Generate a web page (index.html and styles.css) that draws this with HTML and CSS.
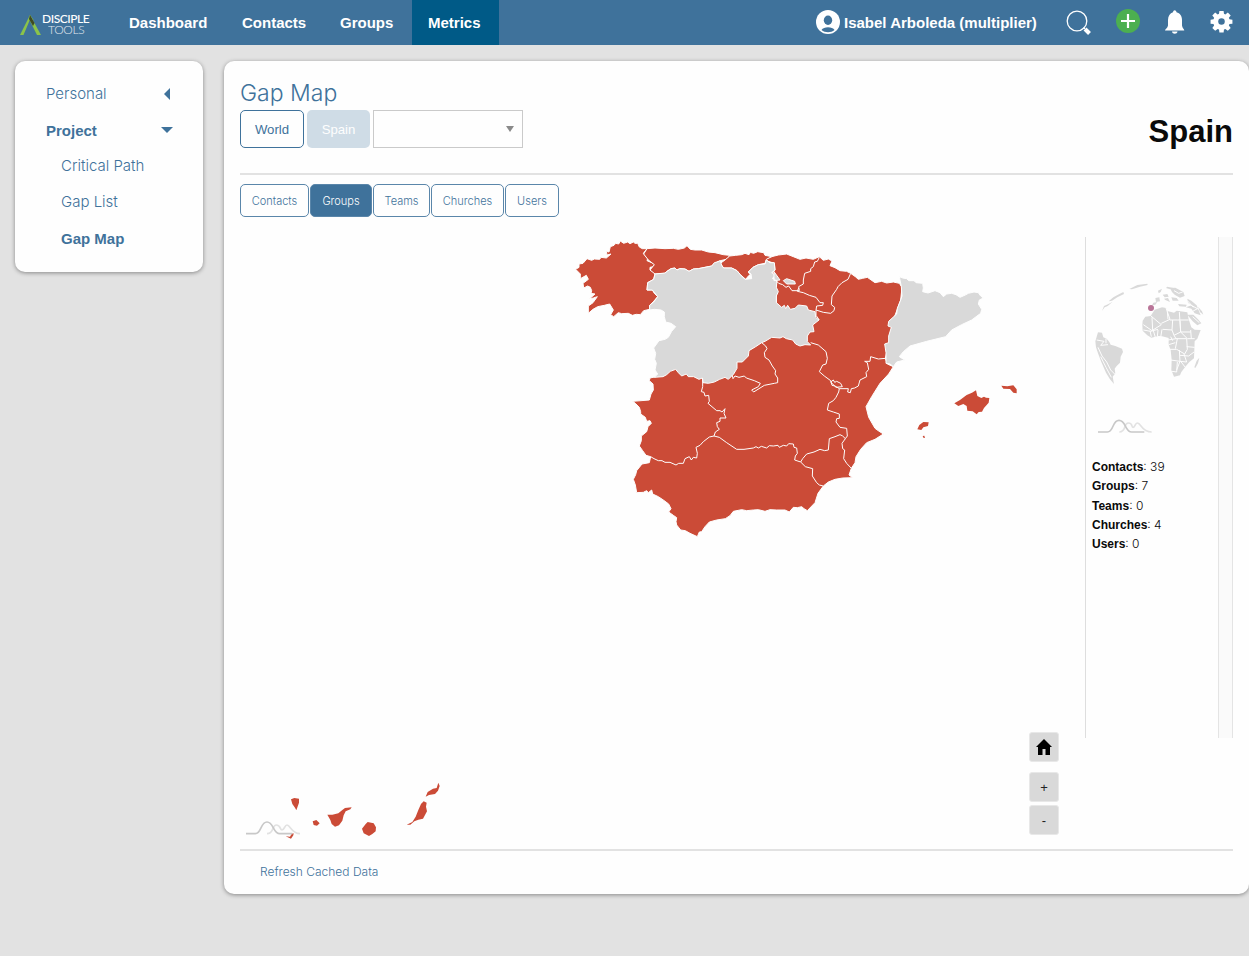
FILE: index.html
```html
<!DOCTYPE html>
<html lang="en">
<head>
<meta charset="utf-8">
<title>Gap Map</title>
<link rel="stylesheet" href="styles.css">
</head>
<body>
<header class="topbar">
  <a class="brand">
    <svg class="brand-mark" viewBox="0 0 21 20"><path d="M0 20 10 0l3.500 5-2 2-1.500-2.500L3.500 20z" fill="#8bc34a"/><path d="m10 0 11 20h-4L9 4z" fill="#8bc34a"/><path d="m10 0 4.500 8-1.500 3-4-7z" fill="#3f4a22"/></svg>
    <span class="brand-text"><b>DISCIPLE</b><span>TOOLS</span></span>
  </a>
  <nav class="menu">
    <a class="w-dash">Dashboard</a><a class="w-contacts">Contacts</a><a class="w-groups">Groups</a><a class="w-metrics active">Metrics</a>
  </nav>
  <div class="tools">
    <svg class="avatar" viewBox="0 0 24 24"><circle cx="12" cy="12" r="12" fill="#fff"/><ellipse cx="12" cy="10.300" rx="4.200" ry="4.700" fill="#3f729b"/><path d="M5.500 20c2-3.700 11-3.700 13 0-3.500 3-9.500 3-13 0z" fill="#3f729b"/></svg>
    <span class="user">Isabel Arboleda (multiplier)</span>
    <svg class="search" viewBox="0 0 25 25"><circle cx="11" cy="11" r="9.800" fill="none" stroke="#fff" stroke-width="1.300"/><path d="m17.500 17.500 1.500 1.500" stroke="#fff"/><path d="m19 19 4.500 4.500" stroke="#fff" stroke-width="4"/></svg>
    <svg class="plus" viewBox="0 0 24 24"><circle cx="12" cy="12" r="12" fill="#4caf50"/><path d="M5 12h14M12 5v14" stroke="#fff" stroke-width="2.200"/></svg>
    <svg class="bell" viewBox="0 0 20 24"><path d="M0 20.500c0-1.500 2.700-2.500 3-5V10c0-4 2-6.800 5-7.700C8 1 9 .3 9.700.3S11.500 1 11.500 2.300C15 3.200 17 6 17 10v5.500c.3 2.500 2.300 3.500 2.300 5z" fill="#fff"/><path d="M7 21.500h5.500c-.3 3-5.200 3-5.500 0z" fill="#fff"/></svg>
    <svg class="gear" viewBox="0 0 24 24"><path d="m9.800 1h4.400l.4 3 1.400.6L18.600 2.700l3 3-1.900 2.500.6 1.500 3.100.4v4.200l-3.100.4-.6 1.500 1.900 2.500-3 3-2.600-1.900-1.400.6-.4 3H9.800l-.4-3-1.400-.6-2.600 1.900-3-3 1.900-2.500-.6-1.500-3.100-.4v-4.200l3.100-.4.6-1.500-1.900-2.500 3-3L8 4.600 9.400 4z" fill="#fff"/><circle cx="12" cy="12" r="3.400" fill="#3f729b"/></svg>
  </div>
</header>
<div class="layout">
  <aside class="card side">
    <a>Personal <i class="tri-left"></i></a>
    <a class="strong">Project <i class="tri-down"></i></a>
    <a class="sub">Critical Path</a>
    <a class="sub">Gap List</a>
    <a class="sub strong">Gap Map</a>
  </aside>
  <main class="card content">
    <section class="head">
      <div>
        <h1>Gap Map</h1>
        <div class="picker">
          <button class="world">World</button><button class="disabled">Spain</button>
          <div class="select"><i></i></div>
        </div>
      </div>
      <h2>Spain</h2>
    </section>
    <div class="tabs">
      <button class="t1">Contacts</button><button class="t2 on">Groups</button><button class="t3">Teams</button><button class="t4">Churches</button><button class="t5">Users</button>
    </div>
    <section class="chart">
      <div class="map">
        <svg viewBox="720 711 2535 1833">
          <g class="area">
            <g transform="translate(1860 1080)">
              <path d="M435-302 455-310 475-315 500-318 520-310 540-302 558-306 580-302 598-310 610-299 625-303 636-297 630-283 645-277 660-268 680-266 692-260 706-250 715-242 728-245 742-248 765-232 785-236 800-231 820-234 838-230 846-218 842-180 820-120 805-42 796-5 802 12 820 20 806 42 780 70 755 110 738 140 746 172 765 205 776 213 790 222 765 238 740 248 722 268 708 290 705 308 694 325 687 345 698 353 668 354 645 358 625 366 610 378 594 400 585 428 562 452 552 446 545 440 532 443 520 442 508 456 495 450 470 450 450 449 435 454 415 449 400 450 380 452 365 449 340 454 330 467 316 476 290 480 268 486 255 500 245 515 238 516 232 530 210 520 196 512 182 510 170 495 168 485 170 473 160 466 146 456 153 446 146 432 130 420 115 410 98 402 95 390 85 398 80 392 70 397 50 398 46 375 40 358 47 344 50 332 66 312 88 308 92 290 78 286 68 272 58 258 64 242 64 228 80 215 84 200 94 190 90 182 80 184 76 172 62 162 62 155 58 142 46 130 38 124 88 120 93 102 100 90 99 72 88 62 90 54 108 50 180 -60 420-90 467-110 469-170 467-245 455-258 465-270 463-290 445-296z"/>
            </g>
            <g transform="translate(1695 690)">
              <path d="M32 118 42 112 42 102 54 100 66 86 80 91 88 87 104 88 108 82 124 84 138 72 126 75 124 64 132 66 136 50 147 46 152 40 161 42 166 33 176 40 188 36 195 41 205 36 210 40 218 40 223 51 232 56 246 56 235 70 248 85 246 92 260 98 270 103 266 110 255 112 255 120 266 125 270 132 266 148 248 158 246 180 262 180 268 190 278 200 266 214 254 226 254 238 236 242 226 254 214 253 202 256 190 250 170 251 160 248 146 260 137 254 145 240 134 222 118 226 98 230 84 238 70 250 70 228 84 218 97 200 85 204 74 206 90 192 78 190 80 182 76 172 68 168 56 174 54 160 70 148 64 136 46 146 46 132z"/>
              <path d="M246 56 270 54 300 56 325 55 340 58 358 54 366 47 376 58 390 60 410 60 430 66 450 68 475 74 494 76 488 87 466 92 456 96 440 108 420 112 400 116 385 117 372 124 360 117 344 116 336 120 330 114 318 116 306 124 300 130 270 132 255 120 268 104 250 90 236 72z"/>
              <path d="M494 78 512 76 530 74 540 70 552 74 556 67 566 70 578 65 596 68 600 76 620 80 604 88 600 100 580 104 564 112 550 126 558 138 552 136 542 148 526 134 516 122 500 114 476 114 466 100 480 90z"/>
            </g>
          </g>
          <g class="area muted">
            <path transform="translate(1695 690)" d="M270 132 300 129 306 124 318 116 330 114 336 120 344 116 360 117 372 124 385 117 400 116 420 112 440 108 448 98 456 96 466 92 470 106 476 114 500 114 516 122 526 134 540 148 560 146 558 132 550 126 564 112 580 104 600 102 604 90 615 98 628 98 630 120 620 128 632 136 622 145 636 152 634 172 640 185 634 198 634 218 650 232 658 226 662 236 668 226 676 238 690 235 700 225 725 228 730 240 750 245 752 262 762 270 743 285 747 305 735 306 727 318 727 335 737 345 720 344 705 348 692 342 683 330 664 326 654 320 645 324 620 322 600 334 590 338 572 350 552 362 550 378 532 396 516 396 516 415 506 432 490 448 480 442 464 448 448 456 430 460 414 458 412 444 402 448 386 440 370 440 364 432 350 438 340 428 332 418 316 424 305 434 294 440 268 442 278 432 270 420 274 400 269 388 272 370 266 354 282 332 300 328 310 322 320 304 332 290 318 280 302 276 298 260 298 246 288 240 268 238 254 240 254 226 266 216 278 200 262 180 246 180 248 158 266 148z"/>
            <path transform="translate(2340 720)" d="M358 110 368 114 380 116 386 122 402 122 408 128 428 130 430 144 428 155 444 159 465 152 480 158 490 170 500 162 515 160 528 164 540 172 556 165 565 160 582 156 595 158 602 168 610 174 598 180 595 192 605 208 602 220 575 240 545 254 515 270 497 290 440 304 390 318 370 335 358 350 374 360 350 366 340 380 330 372 318 370 318 338 314 312 326 308 326 288 334 262 324 258 326 244 350 222 352 205 362 180 366 168 364 140z"/>
            <path transform="translate(2340 720)" d="m10 122 10-6 24 8 2 8-26 0z"/>
            <path transform="translate(2340 720)" d="m-18 95 18 25-18 2z"/>
          </g>
          <g class="line">
            <path transform="translate(1860 1080)" d="M92 290 102 296 115 302 126 302 135 307 150 307 168 315 176 310 190 310 195 296 208 290 214 300 220 292 230 294 232 280 228 262 240 256 250 245 268 231 282 228M248 55V80L244 95 252 97 255 108 266 106 268 124 264 130 290 152 300 152 306 156 315 146 312 160 318 174 300 174 300 184 290 188 292 200 298 208 286 216 282 228M282 228 298 232 320 248 350 268 372 268 400 264 408 260 415 264 424 259 440 264 448 257 460 258 474 256 478 262 490 256 500 258 506 251 520 252 522 262 530 264 532 280 526 288 524 300 542 306M542 306 548 296 560 282 582 276 600 268 614 272 625 270 628 236 645 230 660 224 668 228 676 236 666 250 668 266 674 270 671 296 680 310 694 325M542 306 556 320 578 326 577 348 590 368 598 375 610 378M676 236 682 228 680 205 660 202 648 186 650 176 658 175 658 162 640 156 622 150 626 130 640 122 648 112 656 96 658 86 685 86 683 96 691 98 694 86 704 84 715 78 720 60 740 50 738 38 746 28 742 8 734 4 750 4 752-10 775-3 796-5M572-52 595-45 618-25 622-5 618 12 608 15 598 35 613 48 632 62 636 76 645 78 658 86M632 66 640 60 644 67 650 64 662 70 667 80 648 82z"/>
            <path transform="translate(1695 690)" d="m590 338 12 10 4 8-8 12 2 14 12 8 10 18 10 14-2 10 8 12 0 14-10 2-30 6-16 10-16 10-6-6 20-10 6-10-18-8-24-8-6-6-16 4-12-4-6 8-2-10"/>
            <path transform="translate(2340 720)" d="m118 52-6 12-8 2-4 14-8 6 0 8-18 6-4 20 0 12-14 8 2 12-22 0-10-14-8 4-10-8-12-4-16-16M56 144l-4 10 18 4 18 8 20 6 12 16 10 0-2 8-18 2-2 12M212 100l-8 18-18 10-12 12-4 8-14 20-2 26 10 8-2 10-10 8-22-3-22-7 0 16 10 14"/>
          </g>
          <g class="isle">
            <path transform="translate(2340 720)" d="M523 490 540 480 560 465 576 458 588 451 592 468 604 474 612 470 618 473 628 474 626 488 612 504 606 515 596 516 590 523 578 514 562 512 560 498 550 492 535 498zM664 437 682 439 700 436 710 448 710 460 700 458 690 447 670 446zM412 568 418 555 430 546 446 547 444 558 430 562 424 570zM428 588l5-1 2 7-5-1z"/>
            <path transform="translate(705 2310)" d="M168 88 178 84 192 86 192 98 184 121 180 113 172 102zM233 154 244 150 254 160 246 167 236 165zM277 134 292 134 310 130 322 120 330 114 350 112 346 118 332 124 326 136 322 152 312 166 300 170 290 162 286 150zM392 162 398 156 416 160 423 172 422 184 412 192 402 198 386 190 381 176zM515 164 532 156 542 140 550 120 558 102 566 94 575 98 573 110 576 124 564 146 550 149 538 154 526 164zM572 80 578 66 594 56 605 54 610 38 614 48 609 62 600 72 582 75zM152 199 165 200 170 191 176 190 175 196 168 206z"/>
          </g>
          <g transform="translate(705 2310)" class="logo"><path class="faint" d="M96 191C118 191 110 165 124 165s10 15 17 15 8-15 15-15c10 0 14 26 39 26"/><path d="M33 191h28C80 191 76 156 96 156s18 35 38 35h38"/></g>
        </svg>
        <div class="zoomers">
          <button class="home"><svg viewBox="0 0 16 16"><path d="M8 0 0 8h2v8h4.500v-6h3v6H14V8h2z"/></svg></button>
          <button>+</button><button>-</button>
        </div>
      </div>
      <div class="info">
        <svg viewBox="18 -99 396 639">
          <g class="globe">
            <path d="M66 123 74 112 83 108 98 95 84 103 72 108zM86 94 100 82 118 72 130 66 132 72 112 82 96 92zM148 57 172 45 202 41 203 45 180 50 156 58z"/>
            <path d="M188 152 196 140 212 138 224 119 246 112 258 114 262 123 282 128 290 122 322 127 326 148 334 172 344 179 362 180 352 206 344 214 342 265 328 276 316 290 304 306 300 316 282 320 274 300 275 270 272 240 266 224 266 204 258 202 246 199 236 198 214 203 202 196 188 182 187 166z"/>
            <path d="M46 214 54 187 66 188 70 202 80 206 88 216 92 224 106 228 126 236 129 246 122 260 120 278 110 288 104 296 106 310 98 320 102 342 90 328 78 308 64 276 54 250 48 232z"/>
            <path d="M270 54 286 53 310 66 314 78 300 83 284 74 276 66zM226 84 238 82 240 94 228 96zM220 98 232 96 226 104 216 106zM234 62 246 56 242 66 236 70zM248 74 262 72 266 80 254 82zM252 86 264 84 270 96 256 90zM294 102 320 104 318 110 298 109zM322 86 334 92 350 106 362 136 344 130 334 116 318 112 334 106 324 98zM322 134 340 134 354 148 364 160 352 166 338 154zM343 292 350 272 358 263 354 280 346 294zM274 82 290 84 296 92 278 92zM354 110 366 124 370 134 360 126zM262 50 280 54 270 58 258 54z"/>
            <path class="cuts" d="M213 138 244 164 216 182 190 164M216 142 218 180M244 160 270 148 258 114M270 150 292 150 326 150M262 124 264 148M298 126 302 186 282 196 276 180 248 178M300 152 302 186 332 186M278 150 276 180M246 178 242 202M234 180 232 200M210 182 214 200M190 180 212 184 234 178M302 186 322 206 344 206M332 180 334 206M282 196 288 206 264 210M288 206 320 206 322 238 314 252 290 238 270 238M292 206 286 236M320 230 344 232M298 240 300 274 272 270M300 256 326 258 342 246M312 252 320 276 300 274 290 300M292 276 290 306 276 304M302 274 316 292M266 224 286 218M272 200 278 212M220 182 226 202M282 62 296 70 308 66M330 104 356 118M338 124 352 116M322 92 340 112M338 140 358 158M50 210 72 214 62 226 84 224M54 232 66 258 80 276 92 300 104 312M62 260 78 292 94 322M78 206 78 220"/>
          </g>
          <circle cx="213" cy="114" r="9" fill="#b97598"/>
          <g class="logo"><path class="faint" d="M118 486C140 486 130 459 145 459s8 13 14 13 6-13 13-13c12 0 12 27 43 27"/><path d="M54 486h28C102 486 96 451 117 451s18 35 38 35h38"/></g>
        </svg>
        <ul>
          <li><b>Contacts</b>: 39</li><li><b>Groups</b>: 7</li><li><b>Teams</b>: 0</li><li><b>Churches</b>: 4</li><li><b>Users</b>: 0</li>
        </ul>
      </div>
      <div class="rail"></div>
    </section>
    <footer class="foot">Refresh Cached Data</footer>
  </main>
</div>
</body>
</html>
```

FILE: styles.css
```css
* { box-sizing: border-box; }
body { margin: 0; height: 956px; overflow: hidden; background: #e2e2e2; color: #0a0a0a; font-family: "Liberation Sans", Arial, sans-serif; }
button { font-family: inherit; padding: 0; background: none; }
svg { display: block; flex: none; }

.topbar { display: flex; height: 45px; background: #3f729b; color: #fff; font-weight: bold; font-size: 15px; }
.brand { display: flex; width: 114px; padding: 15px 0 0 20px; }
.brand-mark { width: 21px; height: 20px; }
.brand-text { display: flex; flex-direction: column; font-family: Lato, sans-serif; font-size: 12px; line-height: 10.5px; margin-top: -1px; }
.brand-text b { font-weight: 500; letter-spacing: -.45px; padding-left: 1px; }
.brand-text span { font-weight: 300; padding-left: 7px; letter-spacing: -.3px; opacity: .85; }
.menu { display: flex; line-height: 45px; }
.menu a { padding-left: 15px; }
.w-dash { width: 113px; }
.w-contacts { width: 98px; }
.w-groups { width: 87px; }
.w-metrics { width: 87px; }
.menu .active { background: #005a87; padding-left: 16px; }
.tools { display: flex; margin-left: auto; padding: 10px 16px 0 0; }
.avatar { width: 24px; height: 24px; }
.user { width: 193px; margin: 0 29px 0 4px; line-height: 25px; white-space: nowrap; }
.search { width: 25px; height: 25px; }
.plus { width: 24px; height: 24px; margin: -1px 0 0 25px; }
.bell { width: 20px; height: 24px; margin-left: 25px; }
.gear { width: 23px; height: 23px; margin-left: 25px; }

.layout { display: flex; align-items: flex-start; gap: 21px; padding: 16px 0 0 15px; }
.card { background: #fefefe; border-radius: 10px; box-shadow: 0 1px 4px rgba(0,0,0,.4); }
.side { width: 188px; height: 211px; flex: none; padding: 15px 30px 0 31px; color: #3f729b; font: 300 15px/36px Inter, sans-serif; }
.side a { display: flex; align-items: center; justify-content: space-between; height: 36px; }
.side .sub { padding-left: 15px; }
.side .strong { font: bold 15px "Liberation Sans", sans-serif; }
.tri-left { border: 6px solid transparent; border-right-color: #3f729b; border-left: 0; margin-right: 3px; }
.tri-down { border: 6px solid transparent; border-top-color: #3f729b; border-bottom: 0; }

.content { width: 1025px; height: 833px; flex: none; padding: 0 16px; }
.head { display: flex; justify-content: space-between; height: 114px; border-bottom: 2px solid #e2e2e2; padding-top: 18px; }
.head h1 { margin: 0; height: 31px; font: 300 23px/28px Inter, sans-serif; color: #3f729b; }
.picker { display: flex; gap: 3px; }
.picker button { width: 64px; height: 38px; border: 1px solid #3f729b; border-radius: 5px; color: #3f729b; font-size: 13.2px; }
.picker .disabled { width: 63px; border: 0; background: #cfdce6; color: #fefefe; }
.select { display: flex; justify-content: flex-end; width: 150px; height: 38px; border: 1px solid #cacaca; padding: 15px 8px 0 0; }
.select i { border: 4.500px solid transparent; border-top: 6px solid #8a8a8a; border-bottom: 0; height: 6px; }
.head h2 { margin: 33px 0 0; font-size: 31px; line-height: 40px; }
.tabs { display: flex; gap: 1px; height: 62px; padding-top: 9px; }
.tabs button { height: 33px; border: 1px solid #6f96b6; border-color: #5a86aa; border-radius: 5px; color: #3f729b; font: 300 11px Inter, sans-serif; }
.tabs .on { background: #3f729b; color: #fefefe; }
.t1 { width: 69px; } .t2 { width: 62px; } .t3 { width: 57px; } .t4 { width: 73px; } .t5 { width: 54px; }

.chart { display: flex; align-items: flex-start; height: 614px; border-bottom: 2px solid #e2e2e2; }
.map { position: relative; width: 845px; height: 611px; flex: none; }
.map > svg { width: 845px; height: 611px; }
.area { fill: #cb4b37; stroke: #fefefe; stroke-width: 3; stroke-linejoin: round; }
.muted { fill: #d9d9d9; }
.isle { fill: #cb4b37; }
.line { fill: none; stroke: #fefefe; stroke-width: 3; stroke-linejoin: round; }
.logo { fill: none; stroke: #c8c8c8; stroke-width: 5; }
.logo .faint { stroke: #e2e2e2; }
.zoomers { position: absolute; left: 789px; top: 495px; display: flex; flex-direction: column; gap: 3px; }
.zoomers button { width: 30px; height: 30px; border: 1px solid #e8e8e8; border-radius: 3px; background: #d9d9d9; color: #222; font-size: 13px; }
.zoomers .home { display: flex; align-items: center; justify-content: center; margin-bottom: 7px; }
.home svg { width: 16px; height: 16px; }
.info { width: 133px; height: 501px; border-left: 1px solid #dedede; }
.info svg { width: 132px; height: 213px; }
.globe { fill: #d9d9d9; }
.globe .cuts { fill: none; stroke: #fefefe; stroke-width: 3; }
.info ul { list-style: none; margin: 7px 0 0; padding: 0 0 0 6px; font: 300 12px/19.3px Inter, sans-serif; }
.info b { font: bold 12px "Liberation Sans", sans-serif; }
.rail { width: 15px; height: 501px; background: #fafafa; border: 1px solid #e4e4e4; border-width: 0 1px; }
.foot { padding-left: 20px; font: 300 12px/42px Inter, sans-serif; color: #3f729b; }
```
